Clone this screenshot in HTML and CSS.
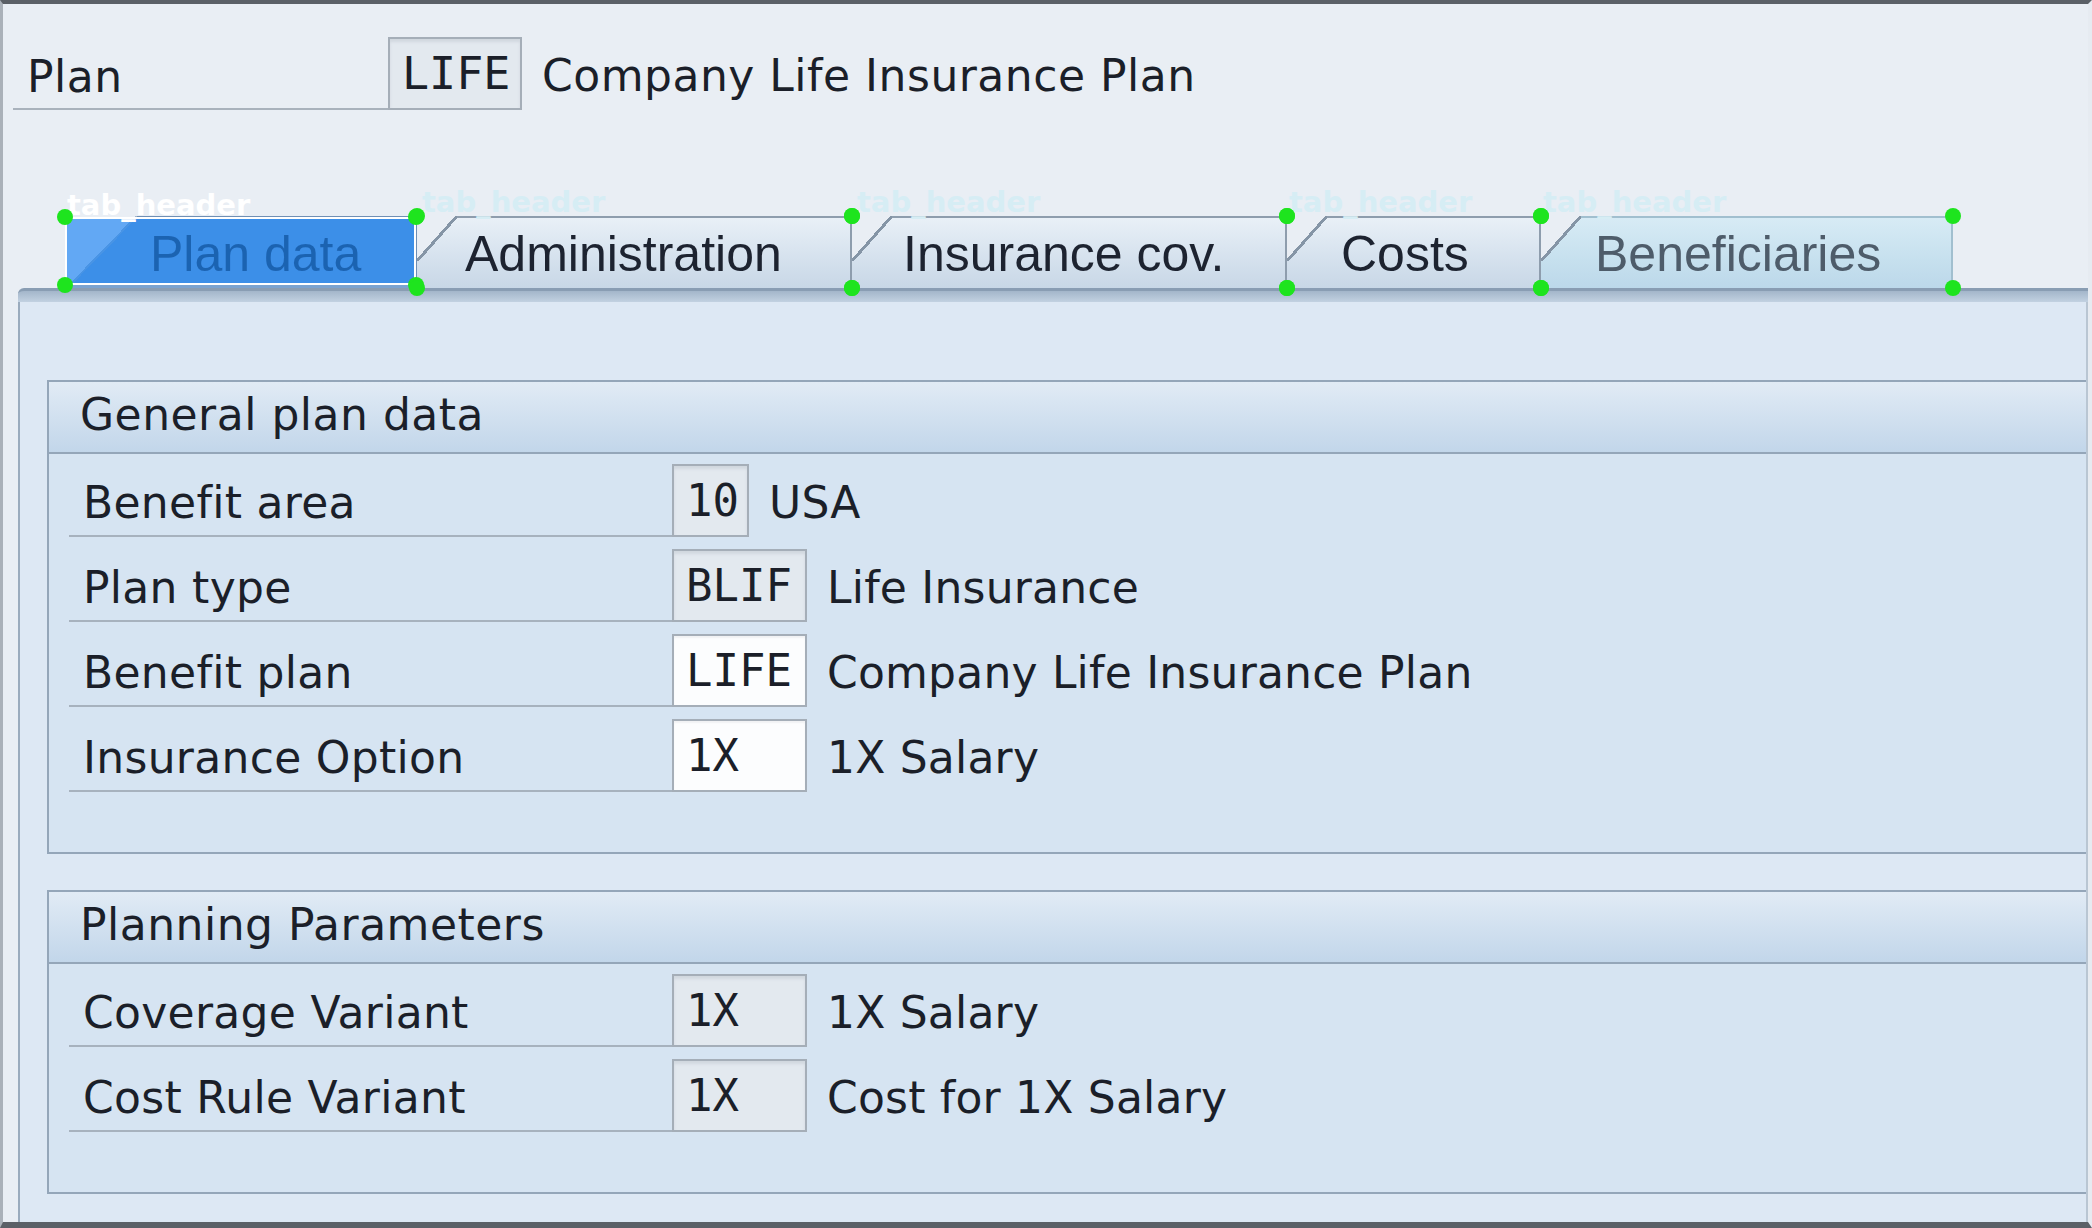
FILE: index.html
```html
<!DOCTYPE html>
<html lang="en">
<head>
<meta charset="utf-8">
<title>Plan data</title>
<link rel="stylesheet" href="styles.css">
</head>
<body>
<div class="frame">
  <div class="plan-row">
    <div class="plan-label">Plan</div>
    <div class="field field--ro field--top">LIFE</div>
    <div class="desc desc--top">Company Life Insurance Plan</div>
  </div>

  <div class="tabs">
    <div class="tab tab--selected tab--plan">
      <span class="tab-text">Plan data</span>
      <div class="annot annot--sel">
        <span class="annot-label annot-label--strong">tab_header</span>
        <i class="dot dot--tl"></i><i class="dot dot--tr"></i><i class="dot dot--bl"></i><i class="dot dot--br"></i>
      </div>
    </div>
    <div class="tab tab--slant tab--admin">
      <span class="tab-text">Administration</span>
      <div class="annot">
        <span class="annot-label">tab_header</span>
        <i class="dot dot--tl"></i><i class="dot dot--tr"></i><i class="dot dot--bl"></i><i class="dot dot--br"></i>
      </div>
    </div>
    <div class="tab tab--slant tab--ins">
      <span class="tab-text">Insurance cov.</span>
      <div class="annot">
        <span class="annot-label">tab_header</span>
        <i class="dot dot--tl"></i><i class="dot dot--tr"></i><i class="dot dot--bl"></i><i class="dot dot--br"></i>
      </div>
    </div>
    <div class="tab tab--slant tab--costs">
      <span class="tab-text">Costs</span>
      <div class="annot">
        <span class="annot-label annot-label--tight">tab_header</span>
        <i class="dot dot--tl"></i><i class="dot dot--tr"></i><i class="dot dot--bl"></i><i class="dot dot--br"></i>
      </div>
    </div>
    <div class="tab tab--slant tab--benef">
      <span class="tab-text">Beneficiaries</span>
      <div class="annot">
        <span class="annot-label annot-label--tight">tab_header</span>
        <i class="dot dot--tl"></i><i class="dot dot--tr"></i><i class="dot dot--bl"></i><i class="dot dot--br"></i>
      </div>
    </div>
  </div>
  <div class="tabbar"></div>

  <div class="panel">
    <section class="group">
      <div class="group-head">General plan data</div>
      <div class="group-body">
        <div class="row">
          <div class="label">Benefit area</div>
          <div class="field field--ro field--short">10</div>
          <div class="desc">USA</div>
        </div>
        <div class="row">
          <div class="label">Plan type</div>
          <div class="field field--ro">BLIF</div>
          <div class="desc">Life Insurance</div>
        </div>
        <div class="row">
          <div class="label">Benefit plan</div>
          <div class="field field--edit">LIFE</div>
          <div class="desc">Company Life Insurance Plan</div>
        </div>
        <div class="row">
          <div class="label">Insurance Option</div>
          <div class="field field--edit">1X</div>
          <div class="desc">1X Salary</div>
        </div>
      </div>
    </section>

    <section class="group">
      <div class="group-head">Planning Parameters</div>
      <div class="group-body">
        <div class="row">
          <div class="label">Coverage Variant</div>
          <div class="field field--ro">1X</div>
          <div class="desc">1X Salary</div>
        </div>
        <div class="row">
          <div class="label">Cost Rule Variant</div>
          <div class="field field--ro">1X</div>
          <div class="desc">Cost for 1X Salary</div>
        </div>
      </div>
    </section>
  </div>
</div>
</body>
</html>
```

FILE: styles.css
```css
* { box-sizing: border-box; }

html, body {
  margin: 0;
  padding: 0;
}

body {
  width: 2092px;
  height: 1228px;
  overflow: hidden;
  background: #e9eef4;
  font-family: "DejaVu Sans", "Liberation Sans", Arial, sans-serif;
  color: #1b1f29;
}

.frame {
  width: 2092px;
  height: 1228px;
  display: flex;
  flex-direction: column;
  background: #e9eef4;
  border-top: 4px solid #5b6067;
  border-bottom: 6px solid #5b6067;
  border-left: 3px solid #aab1b9;
  border-right: 4px solid #e6ebf1;
}

/* ---------- top "Plan" row ---------- */
.plan-row {
  display: flex;
  align-items: flex-start;
  height: 73px;
  margin-top: 33px;
  padding-left: 10px;
}

.plan-label {
  width: 375px;
  height: 73px;
  padding: 6px 0 0 14px;
  font-size: 44px;
  line-height: 67px;
  letter-spacing: 0.5px;
  border-bottom: 2px solid #a9b2bc;
}

/* ---------- input fields ---------- */
.field {
  flex: none;
  width: 135px;
  height: 73px;
  padding-left: 12px;
  border: 2px solid #a5aeb8;
  font-family: "DejaVu Sans Mono", "Liberation Mono", monospace;
  font-size: 44px;
  line-height: 69px;
  color: #1b1f29;
}

.field--top {
  width: 134px;
  font-size: 45px;
}

.field--short { width: 77px; }

.field--ro {
  background: #e3e9ef;
  box-shadow: inset 0 3px 3px rgba(60, 70, 90, 0.10);
}

.field--edit {
  background: #fcfdfe;
  box-shadow: inset 0 2px 2px rgba(60, 70, 90, 0.06);
}

.desc {
  margin-left: 20px;
  padding-top: 4px;
  font-size: 44px;
  line-height: 69px;
  letter-spacing: 0.2px;
  white-space: nowrap;
}

.desc--top { letter-spacing: 0.5px; }

/* ---------- tab strip ---------- */
.tabs {
  position: relative;
  z-index: 1;
  display: flex;
  height: 72px;
  margin-top: 106px;
  margin-left: 62px;
}

.tab {
  position: relative;
  flex: none;
  height: 72px;
  padding-top: 2px;
  border-top: 2px solid #8e9dad;
  border-right: 2px solid #8e9dad;
  background: linear-gradient(#e9f0f7, #d6e2ee 55%, #c8d7e6);
  font-family: "Liberation Sans", Arial, sans-serif;
  font-size: 50px;
  line-height: 68px;
  white-space: nowrap;
  color: #1d2330;
}

.tab--slant::before {
  content: "";
  position: absolute;
  left: 0;
  top: -2px;
  width: 40px;
  height: 45px;
  background: linear-gradient(to bottom right,
    #e9eef4 calc(50% - 1.5px),
    #8595a6 calc(50% - 1.5px),
    #8595a6 calc(50% + 1.5px),
    transparent calc(50% + 1.5px));
}

.tab--selected {
  background: #7ba3d0;
  border-color: #6f8fb5;
}

.tab--selected::before {
  content: "";
  position: absolute;
  left: 0;
  top: -2px;
  width: 72px;
  height: 74px;
  background: linear-gradient(to bottom right,
    #e9eef4 calc(50% - 1px),
    #9fb3c8 calc(50% - 1px),
    #9fb3c8 calc(50% + 1px),
    transparent calc(50% + 1px));
}

.tab-text { position: relative; }

.tab--plan  { width: 352px; padding-left: 85px; }
.tab--admin { width: 435px; padding-left: 48px; }
.tab--ins   { width: 435px; padding-left: 51px; }
.tab--costs { width: 254px; padding-left: 54px; }
.tab--benef {
  width: 412px;
  padding-left: 54px;
  color: #4e5c6a;
  background: linear-gradient(#d7ebf5, #c6e0ee 60%, #bcd8ea);
  border-color: #a1bfcf;
}

/* ---------- annotation overlay ---------- */
.annot {
  position: absolute;
  z-index: 5;
  left: 0;
  right: -2px;
  top: -2px;
  bottom: 0;
}

.annot--sel {
  top: -1px;
  right: -1px;
  bottom: 3px;
  border: 2px solid #ffffff;
  background: rgba(28, 132, 244, 0.66);
}

.annot-label {
  position: absolute;
  left: 5px;
  bottom: 100%;
  margin-bottom: -1px;
  font-family: "DejaVu Sans", sans-serif;
  font-weight: bold;
  font-size: 29px;
  line-height: 29px;
  color: #d6edf4;
}

.annot-label--strong {
  left: 0;
  color: #ffffff;
}

.annot-label--tight { left: 2px; }

.dot {
  position: absolute;
  width: 16px;
  height: 16px;
  margin: -8px 0 0 -8px;
  border-radius: 50%;
  background: #1ee41e;
}

.annot--sel .dot { margin: -10px 0 0 -10px; }
.annot--sel .dot--tr, .annot--sel .dot--br { margin-left: -6px; }
.annot--sel .dot--bl, .annot--sel .dot--br { margin-top: -6px; }

.dot--tl { left: 0; top: 0; }
.dot--tr { left: 100%; top: 0; }
.dot--bl { left: 0; top: 100%; }
.dot--br { left: 100%; top: 100%; }

.tabbar {
  height: 14px;
  margin-left: 15px;
  border-top: 3px solid #899db3;
  border-top-left-radius: 6px;
  background: linear-gradient(#a3b6ca, #c2d1e1);
}

/* ---------- content panel ---------- */
.panel {
  flex: 1;
  display: flex;
  flex-direction: column;
  gap: 36px;
  margin-left: 15px;
  padding: 78px 0 0 27px;
  border-left: 2px solid #9aabbd;
  border-right: 2px solid #b9c6d3;
  background: #dde8f4;
}

.group {
  border: 2px solid #94a6b9;
  border-right: none;
  background: #d6e4f2;
}

.group-head {
  height: 72px;
  padding-left: 31px;
  border-bottom: 2px solid #94a6b9;
  background: linear-gradient(#e1ebf5, #c2d6ea);
  font-size: 44px;
  line-height: 66px;
  letter-spacing: 0.5px;
}

.group-body {
  display: flex;
  flex-direction: column;
  gap: 12px;
  padding: 10px 0 60px 20px;
}

.row {
  display: flex;
  align-items: flex-start;
  height: 73px;
}

.label {
  flex: none;
  width: 603px;
  height: 73px;
  padding: 6px 0 0 14px;
  border-bottom: 2px solid #a7b2be;
  font-size: 44px;
  line-height: 66px;
  letter-spacing: 0.3px;
  white-space: nowrap;
}
```
